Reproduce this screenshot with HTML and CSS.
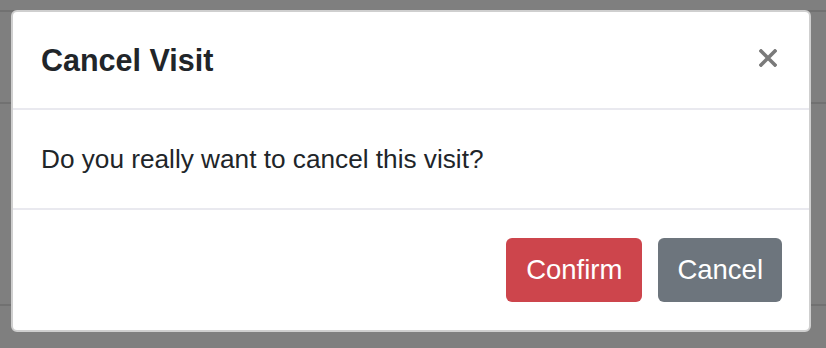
FILE: index.html
```html
<!DOCTYPE html>
<html lang="en">
<head>
    <meta charset="UTF-8">
    <meta name="viewport" content="width=device-width, initial-scale=1.0">
    <title>Cancel Visit</title>
    <link rel="stylesheet" href="styles.css">
</head>
<body>
    <!-- table rows behind the backdrop -->
    <div class="page">
        <div class="row row-top"></div>
        <div class="row row-mid"></div>
        <div class="row row-low"></div>
    </div>

    <div class="modal">
        <div class="modal-header">
            <h5 class="modal-title">Cancel Visit</h5>
            <button type="button" class="close" aria-label="Close">
                <svg width="18" height="18" viewBox="0 0 18 18">
                    <path d="M2 2 L16 16 M16 2 L2 16" stroke="#7a7a7a" stroke-width="3.6" stroke-linecap="square"/>
                </svg>
            </button>
        </div>
        <div class="modal-body">
            Do you really want to cancel this visit?
        </div>
        <div class="modal-footer">
            <button type="button" class="btn btn-danger">Confirm</button>
            <button type="button" class="btn btn-secondary">Cancel</button>
        </div>
    </div>
</body>
</html>
```

FILE: styles.css
```css
body {
    margin: 0;
    font-family: "Liberation Sans", Arial, sans-serif;
    background-color: #7f7f7f;
    width: 826px;
    height: 348px;
    overflow: hidden;
}
.page {
    padding-top: 10px;
}
.row {
    border-top: 2px solid #717171;
}
.row-top {
    height: 90px;
}
.row-mid {
    height: 200px;
}
.modal {
    position: fixed;
    top: 10px;
    left: 11px;
    width: 796px;
    background-color: #ffffff;
    border: 2px solid #cfcfcf;
    border-radius: 6px;
}
.modal-header {
    display: flex;
    align-items: center;
    justify-content: space-between;
    height: 98px;
    padding: 0 32px 0 28px;
    border-bottom: 2px solid #e9e9ef;
    box-sizing: border-box;
}
.modal-title {
    margin: 0;
    font-size: 30.5px;
    font-weight: bold;
    color: #212529;
}
.close {
    display: flex;
    padding: 0;
    margin-top: -4px;
    border: 0;
    background: none;
}
.modal-body {
    display: flex;
    align-items: center;
    height: 98px;
    padding: 0 28px;
    font-size: 26.2px;
    color: #212529;
    border-bottom: 2px solid #e9e9ef;
}
.modal-footer {
    display: flex;
    justify-content: flex-end;
    gap: 16px;
    padding: 28px 27px 28px;
}
.btn {
    height: 64px;
    padding: 0 19px;
    border: 0;
    border-radius: 6px;
    font-family: "Liberation Sans", Arial, sans-serif;
    font-size: 27.5px;
    color: #ffffff;
}
.btn-danger {
    padding: 0 20px;
    background-color: #cd454c;
}
.btn-secondary {
    background-color: #6d757d;
}
```
